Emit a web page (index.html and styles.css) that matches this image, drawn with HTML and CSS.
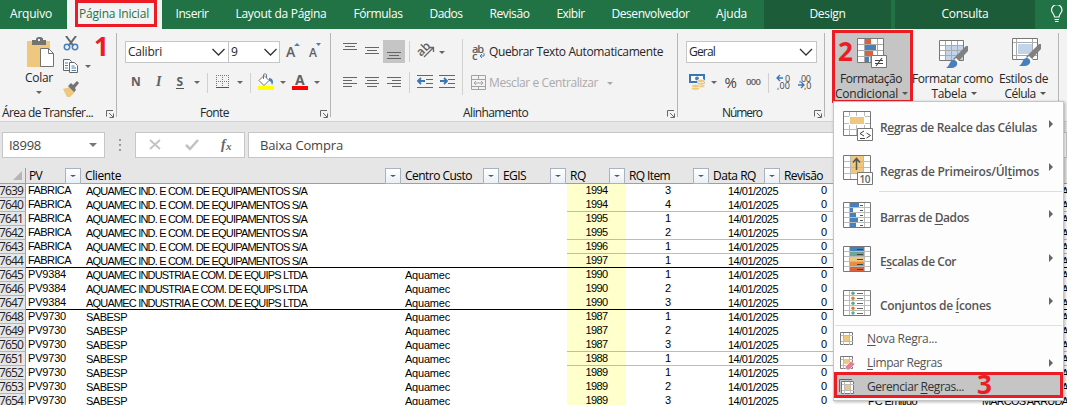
FILE: index.html
```html
<!DOCTYPE html>
<html lang="pt-BR">
<head>
<meta charset="utf-8">
<title>Planilha</title>
<link rel="stylesheet" href="styles.css">
</head>
<body>
<svg class="defs" width="0" height="0">
  <defs>
    <path id="arrow" d="M0 0h6l-3 3z"/>
    <path id="chev" d="M0 0l6 6 6-6" fill="none" stroke="#333" stroke-width="1.3"/>
    <g id="launch" fill="none" stroke="#666"><path d="M.5 6.500V.5H7M3 3l4 4M7.500 3.500v4h-4"/></g>
    <g id="brush">
      <path d="M21 1l2 0v5L12 18l-4-4z" fill="#808080"/>
      <path d="M11 13l4 4-2 2-4-4z" fill="#fff"/>
      <path d="M8 15c3 0 5 2 4 5-2 4-7 3-11 3 4-2 3-7 7-8z" fill="#4680bd"/>
    </g>
  </defs>
</svg>
<div class="window">
  <nav class="tabs">
    <span class="tab file"><b data-w="42">Arquivo</b></span>
    <span class="tab active"><b data-w="70">Página Inicial</b></span>
    <span class="tab"><b data-w="33">Inserir</b></span>
    <span class="tab"><b data-w="91">Layout da Página</b></span>
    <span class="tab"><b data-w="49">Fórmulas</b></span>
    <span class="tab"><b data-w="33">Dados</b></span>
    <span class="tab"><b data-w="40">Revisão</b></span>
    <span class="tab"><b data-w="28">Exibir</b></span>
    <span class="tab"><b data-w="78">Desenvolvedor</b></span>
    <span class="tab help"><b data-w="31">Ajuda</b></span>
    <span class="tab context"><b data-w="36">Design</b></span>
    <span class="tab context second"><b data-w="47">Consulta</b></span>
    <span class="tab tell"><svg width="14" height="18" fill="none" stroke="#fff" stroke-width="1.200"><path d="M4.500 12c0-3-3-4-3-7a5.200 5.200 0 0 1 10.500 0c0 3-3 4-3 7zM4.500 14.500h4.500M5 16.500h3.500"/></svg></span>
  </nav>

  <section class="ribbon">
    <div class="group clipboard">
      <div class="body">
        <div class="paste">
          <svg width="30" height="31"><path d="M1 4h23v26H1z" fill="#edc87e"/><path d="M6 3h4V1.500L12 0h3l2 1.500V3h3v5H6z" fill="#737373"/><path d="M12 2h2v2h-2z" fill="#f3f3f3"/><path d="M14.500 11.500h8l5 5v13h-13z" fill="#fff" stroke="#737373"/><path d="M22.500 11.500v5h5" fill="none" stroke="#737373"/></svg>
          <span data-w="28">Colar</span>
          <svg width="6" height="3" fill="#666"><use href="#arrow"/></svg>
        </div>
        <svg width="32" height="62">
          <path d="M3 0l7.500 10M13 0L5.500 10" stroke="#666" stroke-width="2" fill="none"/><g fill="none" stroke="#4680bd" stroke-width="1.500"><circle cx="4" cy="11" r="2.700"/><circle cx="12" cy="11" r="2.700"/></g>
          <g fill="#fff" stroke="#666"><path d="M.5 23.500h6l2 2v9h-8z"/><path d="M6.500 26.500h5l3 3v7h-8z"/></g><path d="M2 27h3M2 29.500h3M2 32h3M8.500 30h3M8.500 32h4.500M8.500 34.500h4.500" stroke="#4680bd"/><use href="#arrow" x="22" y="29" fill="#666"/>
          <path d="M0 53l7-2 5 5-5 5H4z" fill="#edc87e"/><path d="M5 50l3-3 2 2 4-4 2 2-4 5 1 2-2 2z" fill="#737373"/>
        </svg>
      </div>
      <div class="caption"><span data-w="91">Área de Transfer...</span><svg width="8" height="8"><use href="#launch"/></svg></div>
    </div>

    <div class="group font">
      <div class="line selects">
        <span class="combo family"><span data-w="34">Calibri</span><svg width="13" height="8"><use href="#chev" x=".5" y="1"/></svg></span>
        <span class="combo size"><span data-w="6">9</span><svg width="13" height="8"><use href="#chev" x=".5" y="1"/></svg></span>
        <svg width="42" height="22" class="grow"><g class="glyph light"><text x="1" y="16" font-size="14">A</text><text x="24" y="16" font-size="12">A</text></g><path d="M9 5l3-3 3 3zM31 2h5l-2.500 3z" fill="#4680bd"/></svg>
      </div>
      <svg class="strip" width="204" height="23">
        <g class="glyph"><text x="6" y="13" font-size="12">N</text><text x="31" y="13" font-size="14" font-family="Liberation Serif" font-style="italic">I</text><text x="51.500" y="13" font-size="12">S</text></g><path d="M51 15.500h8" stroke="#555"/>
        <g fill="#666"><use href="#arrow" x="69" y="8"/><use href="#arrow" x="112" y="8"/><use href="#arrow" x="155" y="8"/><use href="#arrow" x="189" y="8"/></g>
        <path d="M82.500 0v20M125.500 0v20" stroke="#d0d0d0"/>
        <path d="M91 2.500h13M91 8.500h13M91.500 2v12M97.500 2v12M103.500 2v12" stroke="#777" stroke-dasharray="1 1"/><path d="M91 14.500h13" stroke="#555"/>
        <path d="M134 7.500l5-5 5 5-5 5zM138.500 6V1.500q1.500-1.500 3 0V5" fill="#fff" stroke="#777"/><path d="M144 5c4 0 5 4 3 7-1-3-1-4-3-4z" fill="#4680bd"/><path d="M133 13h16v4h-16z" fill="#ff0"/>
        <text class="glyph" x="170" y="12" font-size="14">A</text><path d="M167 13h16v4h-16z" fill="#f00"/>
      </svg>
      <div class="caption"><span data-w="29">Fonte</span><svg width="8" height="8"><use href="#launch"/></svg></div>
    </div>

    <div class="group align">
      <div class="body">
        <svg width="132" height="57">
          <path d="M52 1h22v23H52z" fill="#c5c5c5"/>
          <g stroke="#666"><path d="M12 4.500h14M14 7.500h10M12 10.500h14M34 8.500h14M36 11.500h10M34 14.500h14M56 13.500h14M58 16.500h10M56 19.500h14"/>
          <path d="M12 38.500h14M12 41.500h9M12 44.500h14M12 47.500h9M34 38.500h14M36 41.500h10M34 44.500h14M36 47.500h10M56 38.500h14M61 41.500h9M56 44.500h14M61 47.500h9"/>
          <path d="M86 36.500h16M95 40.500h7M95 44.500h7M86 48.500h16M108 36.500h16M117 40.500h7M117 44.500h7M108 48.500h16"/></g>
          <path d="M78.500 2v21M78.500 33v21M131.500 0v56" stroke="#d0d0d0"/>
          <text class="glyph light" font-size="12" transform="translate(90 18) rotate(-45)">ab</text><path d="M93 18l9-9M98 8.500h4.500V13" fill="none" stroke="#666" stroke-width="1.300"/><use href="#arrow" x="108" y="12" fill="#666"/>
          <path d="M94 42h-7m3-3l-3 3 3 3M109 42h7m-3-3l3 3-3 3" fill="none" stroke="#3a75b8" stroke-width="1.800"/>
        </svg>
        <div class="wrapping">
          <div class="wraprow"><svg width="15" height="17"><g class="glyph light"><text x="1" y="9" font-size="11" textLength="12">ab</text><text x="1" y="16" font-size="11">c</text></g><path d="M13 9v3H9m2-2l-2 2 2 2" fill="none" stroke="#4680bd"/></svg><span data-w="174">Quebrar Texto Automaticamente</span></div>
          <div class="wraprow off"><svg width="15" height="16" fill="none" stroke="#a5a0a5"><path d="M.5.5h14v14H.5zM.5 4.500h14M.5 11.500h14M7.500.5v4M7.500 11.500v3M3 8h9M5 6L3 8l2 2M10 6l2 2-2 2"/></svg><span data-w="109">Mesclar e Centralizar</span><svg class="off-arrow" width="6" height="3" fill="#aaa"><use href="#arrow"/></svg></div>
        </div>
      </div>
      <div class="caption"><span data-w="65">Alinhamento</span><svg width="8" height="8"><use href="#launch"/></svg></div>
    </div>

    <div class="group number">
      <div class="line selects"><span class="combo format"><span data-w="26">Geral</span><svg width="15" height="8"><use href="#chev" x="1" y="1"/></svg></span></div>
      <svg class="strip" width="136" height="23">
        <path d="M4 2h14v7H4z" fill="#fff" stroke="#3a75b8" stroke-width="2"/><circle cx="11" cy="5.500" r="2" fill="#4680bd"/><g fill="#edc87e" stroke="#f3f3f3" stroke-width=".7"><ellipse cx="15" cy="13" rx="4" ry="1.700"/><ellipse cx="15" cy="10.500" rx="4" ry="1.700"/><ellipse cx="15" cy="8" rx="4" ry="1.700"/><ellipse cx="9.500" cy="15.500" rx="4" ry="1.700"/><ellipse cx="9.500" cy="13" rx="4" ry="1.700"/></g>
        <use href="#arrow" x="25" y="8" fill="#666"/>
        <text class="glyph regular" x="38.500" y="14.500" font-size="15" textLength="13">%</text><text class="glyph light" x="60" y="12" font-size="9.500" textLength="15">000</text>
        <path d="M82.500 0v20" stroke="#d0d0d0"/>
        <g class="glyph regular"><text x="99" y="8.500" font-size="9">0</text><text x="91" y="16" font-size="9" textLength="13">,00</text><text x="113" y="8.500" font-size="9" textLength="12">,00</text><text x="118" y="16" font-size="9">,0</text></g>
        <path d="M97 5h-6m3-3l-3 3 3 3M112 12h6m-3-3l3 3-3 3" fill="none" stroke="#3a75b8" stroke-width="1.300"/>
      </svg>
      <div class="caption"><span data-w="40">Número</span><svg width="8" height="8"><use href="#launch"/></svg></div>
    </div>

    <div class="group styles">
      <div class="big pressed">
        <svg width="32" height="32"><path d="M.5.5h26v24H.5z" fill="#fff"/><path d="M0 6.500h27M0 12.500h27M0 18.500h27M7.500 0v24M13.500 0v24M20.500 0v24" stroke="#aaa"/><path d="M8 1h6v5H8zM8 13h8v5H8z" fill="#d9623b"/><path d="M8 7h11v5H8zM8 19h4v5H8z" fill="#4680bd"/><path d="M.5.5h26v24H.5z" fill="none" stroke="#777"/><path d="M14.500 17.500h15v12h-15z" fill="#fff" stroke="#777"/><path d="M18 22.500h8M18 25.500h8M25 20l-6 8" stroke="#444" stroke-width="1.200"/></svg>
        <span data-w="62">Formatação</span>
        <span class="more"><span data-w="63">Condicional</span><svg width="6" height="3" fill="#555"><use href="#arrow"/></svg></span>
        <i class="step two">2</i>
      </div>
      <div class="big table">
        <svg width="32" height="32"><path d="M.5 2.500h25v20H.5z" fill="#fff"/><path d="M7 8h18v14H7z" fill="#c1d4ea"/><path d="M0 7.500h25M0 12.500h25M0 17.500h25M6.500 2v20M12.500 2v20M18.500 2v20" stroke="#aaa"/><path d="M.5 2.500h24v20H.5z" fill="none" stroke="#777"/><use href="#brush" x="6" y="7"/></svg>
        <span data-w="81">Formatar como</span>
        <span class="more"><span data-w="35">Tabela</span><svg width="6" height="3" fill="#555"><use href="#arrow"/></svg></span>
      </div>
      <div class="big cell">
        <svg width="32" height="32"><path d="M.5.5h25v21H.5z" fill="#fff" stroke="#777"/><path d="M1 4.500h24M1 17.500h24M4.500 1v20M20.500 1v20" stroke="#aaa"/><path d="M6 6h14v10H6z" fill="#c1d4ea"/><use href="#brush" x="6" y="5"/></svg>
        <span data-w="49">Estilos de</span>
        <span class="more"><span data-w="31">Célula</span><svg width="6" height="3" fill="#555"><use href="#arrow"/></svg></span>
      </div>
    </div>
    <i class="step one">1</i>
  </section>

  <section class="formula">
    <div class="field name"><span data-w="32">I8998</span><svg width="8" height="4"><path d="M0 0h8l-4 4z" fill="#777"/></svg></div>
    <div class="dots"><svg width="3" height="12" fill="#999"><path d="M0 0h2v2H0zM0 5h2v2H0zM0 10h2v2H0z"/></svg></div>
    <div class="field tools"><svg width="90" height="16"><path d="M1 3l10 9M11 3L1 12" stroke="#c2c2c2" stroke-width="1.800"/><path d="M37 8l4 4 8-9" fill="none" stroke="#c2c2c2" stroke-width="2.500"/><text x="72" y="12" class="fx" font-size="14">f</text><text x="77" y="13" class="fx" font-size="11">x</text></svg></div>
    <div class="field input"><span data-w="83">Baixa Compra</span></div>
  </section>

  <main class="sheet">
    <div class="row head">
      <span class="num"><svg width="9" height="9"><path d="M9 0v9H0z" fill="#b5b5b5"/></svg></span>
      <span><b data-w="13">PV</b><i></i></span>
      <span><b data-w="36">Cliente</b><i></i></span>
      <span><b data-w="67">Centro Custo</b><i></i></span>
      <span><b data-w="23">EGIS</b><i></i></span>
      <span><b data-w="16">RQ</b><i></i></span>
      <span><b data-w="41">RQ Item</b><i></i></span>
      <span><b data-w="43">Data RQ</b><i></i></span>
      <span><b data-w="39">Revisão</b></span>
      <span></span><span></span>
    </div>
    <div id="rows"></div>
  </main>

  <aside class="menu">
    <div class="item large">
      <svg width="31" height="32"><path d="M.5.500h27v24H.5z" fill="#fff" stroke="#777"/><path d="M1 5.500h26M1 12.500h26M1 18.500h26M6.500 1v23M13.500 1v23M21.500 1v23" stroke="#bbb"/><path d="M6 5h16v9H6z" fill="#fff"/><path d="M7 6h14v7H7z" fill="#edc87e"/><path d="M14.500 17.500h15v12h-15z" fill="#fff" stroke="#777"/><path d="M21 20l-4 2.500 4 2.500M17 27.500h5M23.500 22l4 2.500-4 2.500" fill="none" stroke="#444"/></svg>
      <b data-w="157">R<u>e</u>gras de Realce das Células</b><em></em></div>
    <div class="item large short">
      <svg width="31" height="32"><path d="M.5.500h27v24H.5z" fill="#fff"/><path d="M8 1h12v17H8z" fill="#edc87e"/><path d="M1 6.500h26M1 12.500h26M1 18.500h26M7.500 1v23M20.500 1v23" stroke="#bbb"/><path d="M.5.500h27v24H.5z" fill="none" stroke="#777"/><path d="M13.500 15V4M10 7.500L13.500 3.500 17 7.500" fill="none" stroke="#555" stroke-width="1.500"/><path d="M14.500 17.500h15v12h-15z" fill="#fff" stroke="#777"/><text class="glyph light" x="16.500" y="27.500" font-size="10" textLength="11">10</text></svg>
      <b data-w="159">Regras de Primeiros/Úl<u>t</u>imos</b><em></em></div>
    <hr class="inset">
    <div class="item large">
      <svg width="31" height="32" class="low"><path d="M.5.500h27v25H.5z" fill="#fff"/><path d="M1 5.500h26M1 10.500h26M1 15.500h26M1 20.500h26M6.500 1v24M21.500 1v24" stroke="#bbb"/><path d="M7 1h9v4H7zM7 6h3v4H7zM7 11h6v4H7zM7 16h8v4H7zM7 21h6v4H7z" fill="#4680bd"/><path d="M17 3.500h3M17 8.500h3M17 13.500h3M17 18.500h3M17 23.500h3" stroke="#555"/><path d="M.5.500h27v25H.5z" fill="none" stroke="#777"/></svg>
      <b data-w="89">Barras de <u>D</u>ados</b><em></em></div>
    <div class="item large">
      <svg width="31" height="32" class="low"><path d="M.5.500h27v25H.5z" fill="#fff"/><path d="M1 5.500h26M1 10.500h26M1 15.500h26M1 20.500h26M6.500 1v24M21.500 1v24" stroke="#bbb"/><path d="M7 1h14v4H7z" fill="#4680bd"/><path d="M7 6h14v4H7z" fill="#72a393"/><path d="M7 11h14v4H7z" fill="#edc87e"/><path d="M7 16h14v4H7z" fill="#e98c3c"/><path d="M7 21h14v4H7z" fill="#d9623b"/><path d="M14 3.500h6M14 8.500h6M14 13.500h6M14 18.500h6M14 23.500h6" stroke="#444"/><path d="M.5.500h27v25H.5z" fill="none" stroke="#777"/></svg>
      <b data-w="76">E<u>s</u>calas de Cor</b><em></em></div>
    <div class="item large short">
      <svg width="31" height="32" class="low"><path d="M.5.500h27v25H.5z" fill="#fff"/><path d="M1 5.500h26M1 10.500h26M1 15.500h26M1 20.500h26M6.500 1v24M21.500 1v24" stroke="#bbb"/><path d="M14 3.500h6M14 8.500h6M14 13.500h6M14 18.500h6M14 23.500h6" stroke="#666"/><g fill="#5ba58c"><circle cx="10" cy="3.300" r="1.700"/><circle cx="10" cy="13.300" r="1.700"/><circle cx="10" cy="23" r="1.700"/></g><g fill="#e87722"><circle cx="10" cy="8.300" r="1.700"/><circle cx="10" cy="18.300" r="1.700"/></g><path d="M.5.500h27v25H.5z" fill="none" stroke="#777"/></svg>
      <b data-w="111">Conjuntos de <u>Í</u>cones</b><em></em></div>
    <hr>
    <div class="item small first"><svg width="15" height="15"><path d="M.5.5h12v12H.5z" fill="#fff" stroke="#777"/><path d="M1 3.500h12M1 9.500h12M3.500 1v12M9.500 1v12" stroke="#bbb"/><path d="M4 4h5v5H4z" fill="#edc87e"/></svg><span data-w="70"><u>N</u>ova Regra...</span></div>
    <div class="item small"><svg width="15" height="15"><path d="M.5.5h12v12H.5z" fill="#fff" stroke="#777"/><path d="M1 3.500h12M1 9.500h12M3.500 1v12M9.500 1v12" stroke="#bbb"/><path d="M4 3h5v5H4z" fill="#edc87e"/><path d="M5 11l6-6 4 3-6 6H7z" fill="#e67f91" stroke="#fff" stroke-width=".6"/></svg><span data-w="75"><u>L</u>impar Regras</span><em></em></div>
    <div class="item small chosen"><svg width="16" height="16"><path d="M.5 13V.5H13" fill="none" stroke="#666"/><path d="M2.500 2.500h12v12h-12z" fill="#fff" stroke="#777"/><path d="M3 5.500h12M3 11.500h12M5.500 3v12M11.500 3v12" stroke="#bbb"/><path d="M6 6h5v5H6z" fill="#edc87e"/></svg><span data-w="97">Gerenciar <u>R</u>egras...</span><i class="step three">3</i></div>
  </aside>
</div>
<script src="app.js"></script>
</body>
</html>
```
FILE: styles.css
```css
*, *::before, *::after { box-sizing: border-box; }
body { margin: 0; font: 12px/16px "Open Sans", "Noto Sans", sans-serif; color: #262626; background: #fff; }
svg { display: block; flex: none; }
.defs { position: absolute; }
[data-w] { white-space: nowrap; display: inline-block; font-weight: 400; }
.window { position: relative; width: 1067px; height: 405px; overflow: hidden; }

.tabs { display: grid; grid-template-columns: 67px 95px 60px 118px 76px 60px 67px 55px 105px 61px 127px 4px 140px 32px; height: 29px; background: #217346; color: #fff; }
.tab { display: flex; align-items: center; justify-content: center; padding-bottom: 2px; }
.file { justify-content: flex-start; padding-left: 10px; }
.active { background: #f3f3f3; color: #217346; position: relative; }
.active::after { content: ""; position: absolute; left: 8px; top: 0; width: 82px; height: 27px; border: 3px solid #ed1c24; }
.active b { margin-right: 1px; }
.help { padding-right: 4px; }
.context { background: #1c5c38; }
.second { grid-column: 13; }
.tell { justify-content: flex-end; padding: 0 3px 1px 0; }

.ribbon { position: relative; display: grid; grid-template-columns: 117px 214px 347px 147px 234px; height: 93px; background: #f3f3f3; border-bottom: 1px solid #d2d2d2; }
.group { position: relative; display: flex; flex-direction: column; }
.group::after { content: ""; position: absolute; right: 0; top: 4px; bottom: 4px; width: 1px; background: #b5b5b5; }
.body { display: flex; height: 75px; }
.caption { display: flex; margin-top: auto; align-items: center; justify-content: space-between; height: 16px; padding-right: 3px; }
.caption svg { margin-top: 1px; }
.clipboard .caption { padding-left: 2px; }
.paste { width: 63px; padding: 8px 0 0 15px; display: flex; flex-direction: column; align-items: center; }
.paste > svg:first-child { margin-left: 4px; }
.paste span { margin-top: 2px; }
.paste svg:last-child { margin-top: 5px; }
.clipboard .body > svg { margin-top: 7px; }
.line { display: flex; height: 22px; }
.selects { margin: 12px 0 10px 8px; }
.combo { display: flex; align-items: center; justify-content: space-between; border: 1px solid #c6c6c6; background: #fff; height: 22px; padding: 0 2px; }
.family { width: 104px; }
.family svg { margin-right: 1px; }
.size { width: 51px; border-left: 0; }
.grow { margin-left: 5px; }
.format { width: 131px; }
.strip { margin-left: 8px; }
.font .caption { padding-left: 83px; }
.align .body > svg { margin-top: 10px; }
.align .caption { padding-left: 132px; }
.number .caption { padding-left: 44px; }
.wrapping { padding: 14px 0 0 8px; }
.wraprow { display: flex; align-items: center; height: 18px; gap: 3px; margin-bottom: 13px; }
.off { color: #aaa; }
.off-arrow { margin-left: 6px; }
.glyph { font-family: "Open Sans"; font-weight: 700; fill: #606060; }
.light { font-weight: 600; }
.regular { font-weight: 400; fill: #444; }

.styles { flex-direction: row; padding-left: 7px; }
.big { display: flex; flex-direction: column; align-items: center; line-height: 15px; height: 73px; margin-top: 1px; padding-top: 8px; }
.big > svg { margin-bottom: 1px; }
.big > span:not(.more) { margin-right: 3px; }
.more { display: flex; align-items: center; gap: 4px; }
.pressed { position: relative; width: 81px; background: #c5c5c5; border: 3px solid #ed1c24; padding-top: 5px; }
.pressed .more { margin-right: 2px; }
.table { width: 82px; }
.table > svg { margin-left: 2px; }
.cell { width: 60px; }
.cell > svg { margin-left: 6px; }
.step { position: absolute; font: 700 26px/26px "Open Sans", sans-serif; color: #ed1c24; }
.one { left: 94px; top: 4px; }
.two { left: 3px; top: 5px; }

.formula { display: flex; height: 46px; background: #e6e6e6; padding: 10px 0 0 2px; font-size: 13px; color: #444; }
.field { height: 26px; border: 1px solid #c6c6c6; background: #fff; display: flex; align-items: center; }
.name { width: 103px; justify-content: space-between; padding: 0 7px 0 6px; }
.dots { width: 30px; display: flex; justify-content: center; height: 26px; align-items: center; }
.tools { width: 110px; padding-left: 13px; }
.input { flex: 1; margin-left: 3px; padding-left: 11px; }
.fx { font-family: "Liberation Serif"; font-style: italic; font-weight: 700; fill: #666; }

.row { display: grid; grid-template-columns: 26px 56px 320px 98px 67px 59px 84px 71px 83px 114px 89px; height: 14px; font: 11px/13px "Liberation Sans", Arial, sans-serif; color: #000; }
.row > span { height: 14px; padding: 1px 0 0 4px; white-space: nowrap; }
.row > .num { background: #e6e6e6; border-right: 1px solid #9f9f9f; border-bottom: 1px solid #b5b5b5; font: 12px/14px "Open Sans", sans-serif; display: flex; justify-content: flex-end; padding: 0 2px 0 0; color: #222; }
.row > .pv { padding: 0 0 0 2px; }
.row > .center { padding-left: 3px; }
.row > .rq { background: #ffffcc; text-align: center; padding: 0; }
.row > .item-no { text-align: center; padding: 0; }
.row > .date { text-align: right; padding-right: 3px; }
.row > .rev { padding: 0 0 0 40px; }
.thin > span:nth-child(n+6) { border-bottom: 1px solid #bbb; }
.thick > span:not(.num) { border-bottom: 1px solid #000; }
.head { height: 16px; background: #e6e6e6; border-bottom: 1px solid #9f9f9f; font: 12px/15px "Open Sans", sans-serif; }
.head > span { display: flex; justify-content: space-between; padding: 0 1px 0 3px; }
.head > .num { height: 15px; border-bottom: 0; padding: 3px 3px 0 0; }
.head i { width: 16px; height: 16px; border: 1px solid #a9b3c0; background: linear-gradient(#fff, #eaf0f7); display: grid; place-items: center; }
.head i::after { content: ""; border: 3px solid transparent; border-top: 2px solid #555; border-bottom: 0; }

.menu { position: absolute; left: 833px; top: 101px; width: 231px; height: 300px; padding-top: 3px; background: #fdfdfd; border: 1px solid #c6c6c6; box-shadow: 1px 1px 3px rgba(0,0,0,.3); color: #555; }
.item { display: flex; align-items: center; position: relative; }
.large { height: 44px; padding-left: 9px; }
.short { height: 42px; padding-top: 2px; }
.large .low { margin-top: 2px; }
.large b { font-weight: 600; margin: 1px 0 0 6px; }
.item em { position: absolute; right: 10px; top: 50%; margin-top: -7px; border: 4px solid transparent; border-left: 4px solid #666; border-right: 0; }
.small { height: 24px; padding-left: 6px; }
.first { margin-top: 1px; }
.small svg { width: 20px; margin-right: 7px; }
.small em { margin-top: -4px; }
u { text-underline-offset: 2px; text-decoration-thickness: 1px; }
hr { border: 0; height: 1px; margin: 0 1px; background: #e1e1e1; }
.inset { margin: 0 1px 3px 45px; background: #d9dee6; }
.chosen { height: 26px; margin-top: -3px; border: 3px solid #ed1c24; background: #c5c5c5; padding: 4px 0 0 2px; color: #333; }
.chosen svg { margin-right: 8px; }
.three { left: 140px; top: -4px; }
```
FILE: app.js
```js
const FAB = ["FABRICA", "AQUAMEC IND. E COM. DE EQUIPAMENTOS S/A", ""];
const PV9384 = ["PV9384", "AQUAMEC INDUSTRIA E COM. DE EQUIPS LTDA", "Aquamec"];
const PV9730 = ["PV9730", "SABESP", "Aquamec"];
const data = [
  [7639, FAB, 1994, 3], [7640, FAB, 1994, 4, "thin"], [7641, FAB, 1995, 1],
  [7642, FAB, 1995, 2, "thin"], [7643, FAB, 1996, 1, "thin"], [7644, FAB, 1997, 1, "thick"],
  [7645, PV9384, 1990, 1], [7646, PV9384, 1990, 2], [7647, PV9384, 1990, 3, "thick"],
  [7648, PV9730, 1987, 1], [7649, PV9730, 1987, 2], [7650, PV9730, 1987, 3, "thin"],
  [7651, PV9730, 1988, 1, "thin"], [7652, PV9730, 1989, 1], [7653, PV9730, 1989, 2],
  [7654, PV9730, 1989, 3]
];
const widths = { FABRICA: 43, PV9384: 38, PV9730: 38, SABESP: 41, Aquamec: 45 };
const fit = (text, w) => `<b data-w="${w}">${text}</b>`;

document.getElementById("rows").innerHTML = data.map(([n, [pv, client, center], rq, item, rule = ""]) => `
  <div class="row ${rule}">
    <span class="num">${fit(n, 24)}</span>
    <span class="pv">${fit(pv, widths[pv])}</span>
    <span>${fit(client, widths[client] || 221)}</span>
    <span class="center">${center && fit(center, widths[center])}</span>
    <span></span>
    <span class="rq">${fit(rq, 22)}</span>
    <span class="item-no">${item}</span>
    <span class="date">${fit("14/01/2025", 50)}</span>
    <span class="rev">0</span>
    <span>${n === 7654 ? fit("PC Emitido", 49) : ""}</span>
    <span>${fit("MARCOS ARRUDA", 86)}</span>
  </div>`).join("");

// Tracks each label so that it fills its nominal width.
document.querySelectorAll("[data-w]").forEach(el => {
  const extra = el.dataset.w - el.getBoundingClientRect().width;
  el.style.letterSpacing = extra / el.textContent.length + "px";
});
```
